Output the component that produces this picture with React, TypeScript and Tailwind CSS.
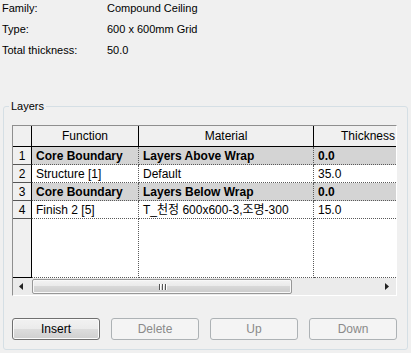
import React from 'react';

type Layer = { n: number; fn: string; material: string; thickness: string; core?: boolean };

const layers: Layer[] = [
  { n: 1, fn: 'Core Boundary', material: 'Layers Above Wrap', thickness: '0.0', core: true },
  { n: 2, fn: 'Structure [1]', material: 'Default', thickness: '35.0' },
  { n: 3, fn: 'Core Boundary', material: 'Layers Below Wrap', thickness: '0.0', core: true },
  { n: 4, fn: 'Finish 2 [5]', material: 'T_천정 600x600-3,조명-300', thickness: '15.0' },
];

const info = [
  ['Family:', 'Compound Ceiling'],
  ['Type:', '600 x 600mm Grid'],
  ['Total thickness:', '50.0'],
];

function LayerRow({ layer }: { layer: Layer }) {
  const cell = `h-full border-b border-dotted border-[#5a5a5a] pl-[4px] pt-[1px] leading-[16px] whitespace-nowrap overflow-hidden ${
    layer.core ? 'bg-[#d4d4d4] font-bold' : 'bg-white'
  }`;
  return (
    <div className="flex h-[18px]">
      <div className="w-[19px] h-full border-r border-b border-r-black border-b-[#555] bg-[#f0f0f0] text-center pt-[1px] leading-[16px]">
        {layer.n}
      </div>
      <div className={`w-[107px] border-r ${cell}`}>{layer.fn}</div>
      <div className={`w-[175px] border-r ${cell}`}>{layer.material}</div>
      <div className={`flex-1 ${cell}`}>{layer.thickness}</div>
    </div>
  );
}

function Button({ label, disabled }: { label: string; disabled?: boolean }) {
  return (
    <button
      className={
        disabled
          ? 'w-[88px] h-[22px] rounded-[3px] border border-[#adb2b5] bg-[#f4f4f4] text-[#8a8a8a] text-[12px]'
          : 'w-[88px] h-[22px] rounded-[3px] border border-[#707070] bg-[linear-gradient(#f2f2f2_0%,#ebebeb_50%,#dddddd_50%,#cfcfcf_100%)] shadow-[inset_0_0_0_1px_#fbfbfb] text-black text-[12px]'
      }
    >
      {label}
    </button>
  );
}

export default function App() {
  return (
    <div className="w-[411px] h-[353px] overflow-hidden bg-[#f0f0f0] font-['Liberation_Sans','Noto_Sans_CJK_KR',sans-serif] text-black text-[11px]">
      <div className="-mt-[2px] pl-[2px]">
        {info.map(([k, v]) => (
          <div key={k} className="grid grid-cols-[105px_1fr] leading-[21px]">
            <span>{k}</span>
            <span>{v}</span>
          </div>
        ))}
      </div>

      <fieldset className="mt-[39px] ml-[3px] w-[405px] h-[250px] rounded-[3px] border border-[#d5dfe5] pl-[8px] pt-[13px]">
        <legend className="-ml-[3px] px-[2px] leading-[12px]">Layers</legend>

        <div className="w-[385px] border-l border-t border-l-[#8f8f8f] border-t-[#8f8f8f] border-r border-b border-r-white border-b-white text-[12px]">
          <div className="flex h-[21px] bg-[#f0f0f0] border-b border-black leading-[20px]">
            <div className="w-[19px] border-r border-black" />
            <div className="w-[107px] border-r border-black text-center">Function</div>
            <div className="w-[175px] border-r border-black text-center">Material</div>
            <div className="flex-1 text-right pr-[1px]">Thickness</div>
          </div>

          {layers.map((l) => (
            <LayerRow key={l.n} layer={l} />
          ))}

          <div className="flex h-[59px]">
            <div className="w-[19px] border-r border-b border-black bg-[#f0f0f0]" />
            <div className="w-[107px] border-r border-b border-dotted border-[#5a5a5a] bg-white" />
            <div className="w-[175px] border-r border-b border-dotted border-[#5a5a5a] bg-white" />
            <div className="flex-1 border-b border-dotted border-[#5a5a5a] bg-white" />
          </div>

          <div className="flex h-[17px] items-center bg-[#ebebeb]">
            <div className="w-[19px] h-full flex items-center justify-center pr-[3px]">
              <svg width="4" height="7" viewBox="0 0 4 7">
                <polygon points="4,0 4,7 0,3.5" fill="#222" />
              </svg>
            </div>
            <div className="w-[260px] h-[15px] rounded-[2px] border border-[#979797] bg-[linear-gradient(#f3f3f3_0%,#e9e9e9_50%,#d8d8d8_50%,#cbcbcb_100%)] shadow-[inset_0_0_0_1px_#f8f8f8] flex items-center justify-center gap-[2px]">
              <span className="w-[1px] h-[6px] bg-[#555] shadow-[1px_0_0_#fff]" />
              <span className="w-[1px] h-[6px] bg-[#555] shadow-[1px_0_0_#fff]" />
              <span className="w-[1px] h-[6px] bg-[#555] shadow-[1px_0_0_#fff]" />
            </div>
            <div className="flex-1" />
            <div className="w-[19px] h-full flex items-center justify-center">
              <svg width="4" height="7" viewBox="0 0 4 7">
                <polygon points="0,0 0,7 4,3.5" fill="#222" />
              </svg>
            </div>
          </div>
        </div>

        <div className="mt-[22px] w-[385px] flex justify-between">
          <Button label="Insert" />
          <Button label="Delete" disabled />
          <Button label="Up" disabled />
          <Button label="Down" disabled />
        </div>
      </fieldset>
    </div>
  );
}
